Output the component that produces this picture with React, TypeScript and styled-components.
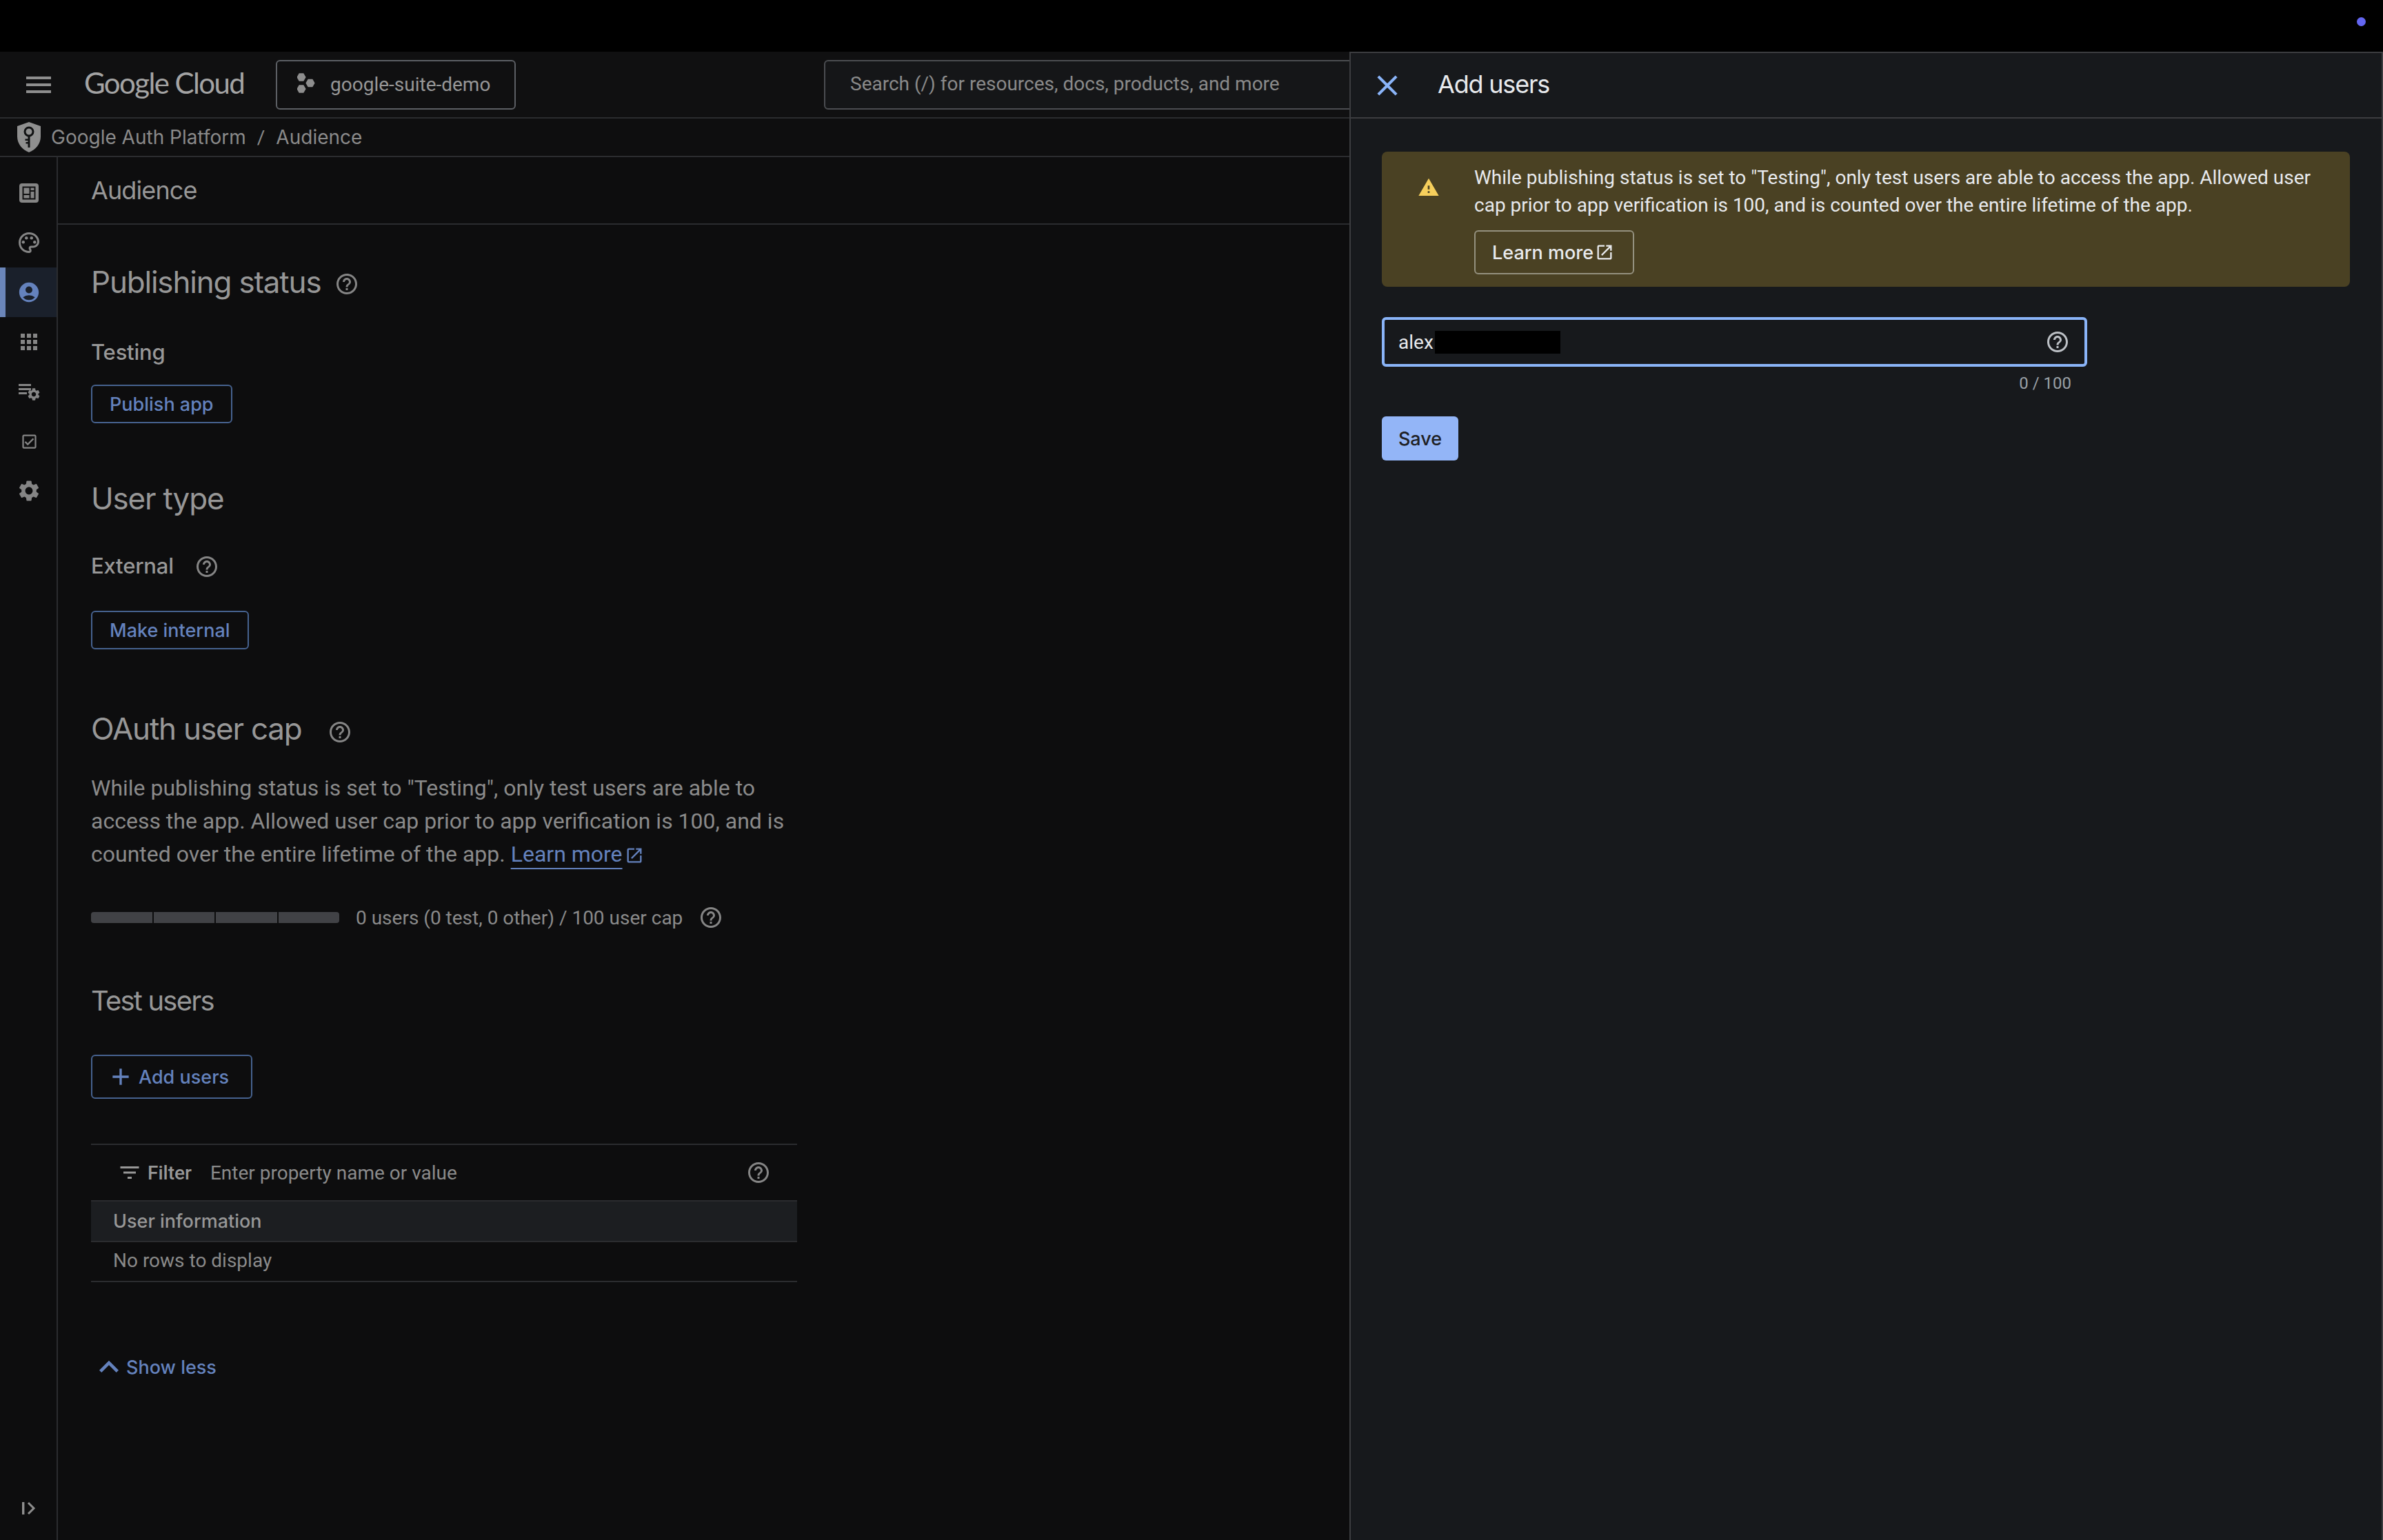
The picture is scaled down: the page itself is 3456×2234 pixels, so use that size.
import { FC, ReactNode } from 'react';
import styled, { createGlobalStyle } from 'styled-components';
import {
  MdAccountCircle,
  MdAdd,
  MdApps,
  MdClose,
  MdExpandLess,
  MdFilterList,
  MdHelpOutline,
  MdMenu,
  MdOpenInNew,
  MdOutlineCheckBox,
  MdOutlinePalette,
  MdSettings,
  MdWarning,
} from 'react-icons/md';

const SANS = '"Roboto", "Liberation Sans", sans-serif';
const DISPLAY = '"Inter", "Roboto", sans-serif';
const DIM = '#979797';
const DIM_BODY = '#8a8a8a';
const DIM_BLUE = '#6482bd';
const LINE = '#2b2c2f';

const GEAR =
  'M19.14 12.94c.04-.3.06-.61.06-.94 0-.32-.02-.64-.07-.94l2.03-1.58c.18-.14.23-.41.12-.61l-1.92-3.32c-.12-.22-.37-.29-.59-.22l-2.39.96c-.5-.38-1.03-.7-1.62-.94l-.36-2.54c-.04-.24-.24-.41-.48-.41h-3.84c-.24 0-.43.17-.47.41l-.36 2.54c-.59.24-1.13.57-1.62.94l-2.39-.96c-.22-.08-.47 0-.59.22L2.74 8.87c-.12.21-.08.47.12.61l2.03 1.58c-.05.3-.09.63-.09.94s.02.64.07.94l-2.03 1.58c-.18.14-.23.41-.12.61l1.92 3.32c.12.22.37.29.59.22l2.39-.96c.5.38 1.03.7 1.62.94l.36 2.54c.05.24.24.41.48.41h3.84c.24 0 .44-.17.47-.41l.36-2.54c.59-.24 1.13-.56 1.62-.94l2.39.96c.22.08.47 0 .59-.22l1.92-3.32c.12-.22.07-.47-.12-.61l-2.01-1.58zM12 15.6c-1.98 0-3.6-1.62-3.6-3.6s1.62-3.6 3.6-3.6 3.6 1.62 3.6 3.6-1.62 3.6-3.6 3.6z';

const GlobalStyle = createGlobalStyle`
  html, body {
    margin: 0;
    height: 2234px;
    overflow: hidden;
    background: #0d0d0e;
    font-family: ${SANS};
  }
  * {
    box-sizing: border-box;
  }
`;

const DashboardIcon: FC = () => (
  <svg width='28' height='28' viewBox='0 0 28 28'>
    <rect width='28' height='28' rx='4' fill='#858585' />
    <rect x='4.500' y='4.500' width='19' height='19' fill='#111112' />
    <path
      d='M6.500 6.500h8v8.500h-8zM6.500 17h8v4.500h-8zM16.500 6.500h5v3.500h-5zM16.500 12h5v9.500h-5z'
      fill='#858585'
    />
  </svg>
);

const RulesIcon: FC = () => (
  <svg width='32' height='28' viewBox='0 0 32 28'>
    <path d='M1 3h18v3H1zM1 9h18v3H1zM1 15h12v3H1z' fill='#858585' />
    <g transform='translate(12.200 7.200) scale(.9)'>
      <path d={GEAR} fill='#858585' />
    </g>
  </svg>
);

const ProjectIcon: FC = () => (
  <svg width='28' height='34' viewBox='0 0 28 34'>
    <path
      d='M-.6 6l3.300-5.700h6.600L12.600 6l-3.300 5.700H2.700zM12.400 14.500l3.300-5.700h6.600l3.300 5.700-3.300 5.700h-6.600zM-.6 23l3.300-5.700h6.600l3.300 5.700-3.300 5.700H2.700z'
      fill='#8e8e8e'
    />
  </svg>
);

const ShieldIcon: FC = () => (
  <svg width='36' height='44' viewBox='0 0 36 44'>
    <path
      d='M18 0l17 6v15c0 10.500-7 19-17 23C8 40 1 31.500 1 21V6z'
      fill='#8f8f8f'
    />
    <circle cx='18' cy='14' r='6' fill='none' stroke='#101112' strokeWidth='3' />
    <path
      d='M16.500 19.500h3V37h-3zM12.500 24.500h4v2.600h-4zM13.500 29h3v2.600h-3z'
      fill='#101112'
    />
  </svg>
);

const CollapseIcon: FC = () => (
  <svg width='20' height='20' viewBox='0 0 20 20'>
    <path d='M0 1h3.400v18H0z' fill='#8d8d8d' />
    <path d='M9 2l8 8-8 8' fill='none' stroke='#8d8d8d' strokeWidth='3' />
  </svg>
);

interface SideItem {
  key: string;
  icon: ReactNode;
  active?: boolean;
}

const sideItems: SideItem[] = [
  { key: 'overview', icon: <DashboardIcon /> },
  { key: 'branding', icon: <MdOutlinePalette size={36} /> },
  { key: 'audience', icon: <MdAccountCircle size={34} />, active: true },
  { key: 'clients', icon: <MdApps size={36} /> },
  { key: 'access', icon: <RulesIcon /> },
  { key: 'verification', icon: <MdOutlineCheckBox size={27} /> },
  { key: 'settings', icon: <MdSettings size={36} /> },
];

const App: FC = () => (
  <Page>
    <GlobalStyle />
    <TopStrip>
      <StatusDot />
    </TopStrip>
    <Header>
      <MenuButton>
        <MdMenu size={48} />
      </MenuButton>
      <Logo>Google Cloud</Logo>
      <ProjectPicker>
        <ProjectIcon />
        google-suite-demo
      </ProjectPicker>
      <SearchBox>Search (/) for resources, docs, products, and more</SearchBox>
    </Header>
    <Breadcrumb>
      <ShieldIcon />
      <CrumbLink>Google Auth Platform</CrumbLink>
      <CrumbSep>/</CrumbSep>
      <CrumbLink>Audience</CrumbLink>
    </Breadcrumb>
    <Body>
      <Sidebar>
        <SideList>
          {sideItems.map((item) => (
            <SideRow key={item.key} $active={item.active}>
              {item.icon}
            </SideRow>
          ))}
        </SideList>
        <CollapseRow>
          <CollapseIcon />
        </CollapseRow>
      </Sidebar>
      <Content>
        <TitleBar>Audience</TitleBar>
        <Sections>
          <Heading $top={55}>
            Publishing status
            <Help $left={20} $top={6} />
          </Heading>
          <Label $top={53}>Testing</Label>
          <OutlineButton $top={28}>Publish app</OutlineButton>

          <Heading $top={81}>User type</Heading>
          <Label $top={49}>
            External
            <Help $left={30} $top={4} />
          </Label>
          <OutlineButton $top={46}>Make internal</OutlineButton>

          <Heading $top={87}>
            OAuth user cap
            <Help $left={37} $top={10} />
          </Heading>
          <Paragraph>
            While publishing status is set to "Testing", only test users are
            able to access the app. Allowed user cap prior to app verification
            is 100, and is counted over the entire lifetime of the app.{' '}
            <TextLink>Learn more</TextLink>
            <LinkIcon>
              <MdOpenInNew size={28} />
            </LinkIcon>
          </Paragraph>
          <CapRow>
            <CapBar>
              <CapSegment />
              <CapSegment />
              <CapSegment />
              <CapSegment />
            </CapBar>
            <CapText>0 users (0 test, 0 other) / 100 user cap</CapText>
            <Help $left={23} $top={0} />
          </CapRow>

          <SubHeading>Test users</SubHeading>
          <AddButton>
            <MdAdd size={40} />
            Add users
          </AddButton>

          <Table>
            <FilterRow>
              <FilterLabel>
                <MdFilterList size={36} />
                Filter
              </FilterLabel>
              <FilterInput>Enter property name or value</FilterInput>
              <Help $left={0} $top={0} />
            </FilterRow>
            <HeadRow>User information</HeadRow>
            <EmptyRow>No rows to display</EmptyRow>
          </Table>

          <ShowLess>
            <MdExpandLess size={56} />
            Show less
          </ShowLess>
        </Sections>
      </Content>
    </Body>

    <Panel>
      <PanelHeader>
        <CloseButton>
          <MdClose size={50} />
        </CloseButton>
        <PanelTitle>Add users</PanelTitle>
      </PanelHeader>
      <PanelBody>
        <Notice>
          <NoticeIcon>
            <MdWarning size={32} />
          </NoticeIcon>
          <NoticeContent>
            <NoticeText>
              While publishing status is set to "Testing", only test users are
              able to access the app. Allowed user cap prior to app verification
              is 100, and is counted over the entire lifetime of the app.
            </NoticeText>
            <NoticeButton>
              Learn more
              <MdOpenInNew size={28} />
            </NoticeButton>
          </NoticeContent>
        </Notice>
        <EmailField>
          alex
          <Redaction />
          <FieldHelp>
            <MdHelpOutline size={36} />
          </FieldHelp>
        </EmailField>
        <Counter>0 / 100</Counter>
        <SaveButton>Save</SaveButton>
      </PanelBody>
    </Panel>
  </Page>
);

const Help: FC<{ $left: number; $top: number }> = ({ $left, $top }) => (
  <HelpWrap $left={$left} $top={$top}>
    <MdHelpOutline size={36} />
  </HelpWrap>
);

const Page = styled.div`
  position: relative;
  width: 3456px;
  height: 2234px;
  display: flex;
  flex-direction: column;
  overflow: hidden;
  background: #0d0d0e;
`;

const TopStrip = styled.div`
  position: relative;
  height: 75px;
  flex: none;
  background: #000;
`;

const StatusDot = styled.span`
  position: absolute;
  top: 25px;
  right: 25px;
  width: 13px;
  height: 13px;
  border-radius: 50%;
  background: #6366f1;
`;

const Header = styled.header`
  height: 97px;
  flex: none;
  display: flex;
  align-items: center;
  padding-left: 32px;
  background: #101011;
  border-bottom: 2px solid ${LINE};
`;

const MenuButton = styled.div`
  display: flex;
  color: #8e8e8e;
`;

const Logo = styled.div`
  width: 232px;
  margin: -6px 46px 0 42px;
  font-family: 'Lato', sans-serif;
  font-size: 42px;
  letter-spacing: -1.6px;
  white-space: nowrap;
  color: #a4a4a4;
`;

const ProjectPicker = styled.div`
  width: 348px;
  height: 72px;
  display: flex;
  align-items: center;
  gap: 20px;
  padding-left: 29px;
  border: 2px solid #5c5f64;
  border-radius: 6px;
  font-size: 28px;
  color: ${DIM};
`;

const SearchBox = styled.div`
  width: 800px;
  height: 72px;
  display: flex;
  align-items: center;
  margin-left: 447px;
  padding: 0 0 2px 36px;
  background: #151618;
  border: 2px solid #4b4d51;
  border-radius: 6px;
  font-size: 28px;
  color: ${DIM_BODY};
`;

const Breadcrumb = styled.nav`
  height: 56px;
  flex: none;
  display: flex;
  align-items: center;
  padding-left: 24px;
  background: #0e0e0f;
  border-bottom: 2px solid ${LINE};
  font-size: 28px;
  color: ${DIM_BODY};
`;

const CrumbLink = styled.span`
  margin-left: 14px;
  font-family: ${DISPLAY};
  font-size: 28px;
`;

const CrumbSep = styled.span`
  margin-left: 16px;
  margin-right: 2px;
`;

const Body = styled.div`
  flex: 1;
  display: flex;
  min-height: 0;
`;

const Sidebar = styled.aside`
  width: 84px;
  flex: none;
  display: flex;
  flex-direction: column;
  justify-content: space-between;
  padding-top: 16px;
  border-right: 2px solid ${LINE};
`;

const SideList = styled.div`
  display: flex;
  flex-direction: column;
`;

const SideRow = styled.div<{ $active?: boolean }>`
  height: 72px;
  display: flex;
  align-items: center;
  justify-content: center;
  padding-left: 2px;
  color: ${(p) => (p.$active ? DIM_BLUE : '#858585')};
  background: ${(p) => (p.$active ? '#1a202b' : 'transparent')};
  box-shadow: ${(p) => (p.$active ? 'inset 8px 0 0 #6b86ba' : 'none')};
`;

const CollapseRow = styled.div`
  height: 68px;
  display: flex;
  justify-content: center;
  padding: 12px 0 0 2px;
`;

const Content = styled.main`
  flex: 1;
  min-width: 0;
`;

const TitleBar = styled.div`
  height: 98px;
  display: flex;
  align-items: center;
  padding-left: 48px;
  border-bottom: 2px solid ${LINE};
  font-family: ${DISPLAY};
  font-size: 36px;
  letter-spacing: -0.9px;
  color: ${DIM};
`;

const Sections = styled.div`
  display: flex;
  flex-direction: column;
  align-items: flex-start;
  padding-left: 48px;
`;

const Heading = styled.h2<{ $top: number }>`
  display: flex;
  align-items: center;
  height: 56px;
  margin: ${(p) => p.$top}px 0 0;
  font-family: ${DISPLAY};
  font-size: 44px;
  font-weight: 400;
  letter-spacing: -1.2px;
  color: ${DIM};
`;

const SubHeading = styled.h3`
  height: 56px;
  margin: 73px 0 0;
  font-family: ${DISPLAY};
  font-size: 40px;
  font-weight: 400;
  line-height: 56px;
  letter-spacing: -1.8px;
  color: ${DIM};
`;

const Label = styled.div<{ $top: number }>`
  display: flex;
  align-items: center;
  height: 40px;
  margin-top: ${(p) => p.$top}px;
  font-family: ${DISPLAY};
  font-size: 31px;
  font-weight: 500;
  letter-spacing: -0.2px;
  color: ${DIM};
`;

const HelpWrap = styled.span<{ $left: number; $top: number }>`
  display: inline-flex;
  margin-left: ${(p) => p.$left}px;
  margin-top: ${(p) => p.$top}px;
  color: #858585;
`;

const OutlineButton = styled.div<{ $top: number }>`
  height: 56px;
  display: inline-flex;
  align-items: center;
  margin-top: ${(p) => p.$top}px;
  padding: 0 25px;
  border: 2px solid #46628f;
  border-radius: 6px;
  font-family: ${DISPLAY};
  font-size: 27px;
  font-weight: 500;
  color: ${DIM_BLUE};
`;

const Paragraph = styled.p`
  width: 1030px;
  margin: 34px 0 0;
  font-size: 32px;
  line-height: 48px;
  color: ${DIM_BODY};
`;

const TextLink = styled.span`
  color: ${DIM_BLUE};
  text-decoration: underline;
  text-underline-offset: 9px;
  text-decoration-thickness: 2px;
`;

const LinkIcon = styled.span`
  display: inline-flex;
  margin-left: 3px;
  vertical-align: -5px;
  color: ${DIM_BLUE};
`;

const CapRow = styled.div`
  display: flex;
  align-items: center;
  height: 40px;
  margin-top: 48px;
`;

const CapBar = styled.div`
  width: 360px;
  height: 16px;
  display: grid;
  grid-template-columns: repeat(4, 1fr);
  gap: 2px;
  border-radius: 4px;
  overflow: hidden;
`;

const CapSegment = styled.span`
  background: #414246;
`;

const CapText = styled.span`
  margin-left: 24px;
  font-size: 28px;
  color: ${DIM_BODY};
`;

const AddButton = styled.div`
  width: 234px;
  height: 64px;
  display: flex;
  align-items: center;
  gap: 6px;
  margin-top: 50px;
  padding-left: 21px;
  border: 2px solid #46628f;
  border-radius: 6px;
  font-family: ${DISPLAY};
  font-size: 27px;
  font-weight: 500;
  white-space: nowrap;
  color: ${DIM_BLUE};
`;

const Table = styled.div`
  width: 1024px;
  margin-top: 65px;
  border-top: 2px solid ${LINE};
  font-size: 28px;
`;

const FilterRow = styled.div`
  height: 80px;
  display: flex;
  align-items: center;
  padding: 0 38px 0 38px;
`;

const FilterLabel = styled.div`
  display: flex;
  align-items: center;
  gap: 8px;
  font-weight: 500;
  color: ${DIM};
`;

const FilterInput = styled.div`
  flex: 1;
  margin-left: 27px;
  color: ${DIM_BODY};
`;

const HeadRow = styled.div`
  height: 61px;
  display: flex;
  align-items: center;
  padding-left: 32px;
  background: #1c1e21;
  border-top: 2px solid ${LINE};
  border-bottom: 2px solid ${LINE};
  font-family: ${DISPLAY};
  font-size: 27px;
  font-weight: 500;
  color: ${DIM};
`;

const EmptyRow = styled.div`
  height: 58px;
  display: flex;
  align-items: center;
  padding: 0 0 4px 32px;
  border-bottom: 2px solid ${LINE};
  color: ${DIM_BODY};
`;

const ShowLess = styled.div`
  height: 40px;
  display: flex;
  align-items: center;
  margin-top: 103px;
  margin-left: -2px;
  font-family: ${DISPLAY};
  font-size: 27px;
  font-weight: 500;
  color: ${DIM_BLUE};
  & > svg {
    margin-right: -3px;
  }
`;

const Panel = styled.aside`
  position: absolute;
  top: 75px;
  left: 1957px;
  right: 0;
  bottom: 0;
  background: #17191c;
  border-top: 2px solid #3c3d40;
  border-left: 2px solid #3c3d40;
  border-right: 2px solid #3c3d40;
`;

const PanelHeader = styled.div`
  height: 95px;
  display: flex;
  align-items: center;
  padding-left: 28px;
  border-bottom: 2px solid #3c3d40;
`;

const CloseButton = styled.div`
  display: flex;
  color: #8ab4f8;
`;

const PanelTitle = styled.h1`
  margin: -3px 0 0 48px;
  font-family: ${DISPLAY};
  font-size: 36px;
  font-weight: 400;
  letter-spacing: -1.2px;
  color: #e8eaed;
`;

const PanelBody = styled.div`
  padding: 48px 46px 0 45px;
`;

const Notice = styled.div`
  display: flex;
  padding: 18px 34px 18px 52px;
  background: #4a4123;
  border-radius: 8px;
`;

const NoticeIcon = styled.div`
  flex: none;
  width: 82px;
  margin-top: 18px;
  color: #f6cf5c;
`;

const NoticeContent = styled.div`
  flex: 1;
`;

const NoticeText = styled.div`
  font-size: 28px;
  line-height: 40px;
  color: #e8eaed;
`;

const NoticeButton = styled.div`
  width: 232px;
  height: 64px;
  display: flex;
  align-items: center;
  margin-top: 16px;
  padding-left: 24px;
  gap: 2px;
  border: 2px solid #94917f;
  border-radius: 6px;
  font-family: ${DISPLAY};
  font-size: 27px;
  font-weight: 500;
  color: #e8eaed;
`;

const EmailField = styled.div`
  width: 1023px;
  height: 72px;
  display: flex;
  align-items: center;
  margin-top: 44px;
  padding: 0 21px 0 20px;
  border: 4px solid #8ab4f8;
  border-radius: 6px;
  font-size: 28px;
  color: #e8eaed;
`;

const Redaction = styled.span`
  width: 182px;
  height: 33px;
  margin: 1px 0 0 2px;
  background: #000;
`;

const FieldHelp = styled.span`
  display: flex;
  margin-left: auto;
  color: #bdc1c6;
`;

const Counter = styled.div`
  width: 1000px;
  margin-top: 10px;
  text-align: right;
  font-size: 24px;
  line-height: 28px;
  color: #9aa0a6;
`;

const SaveButton = styled.div`
  width: 111px;
  height: 64px;
  display: flex;
  align-items: center;
  justify-content: center;
  margin-top: 34px;
  background: #93b5f7;
  border-radius: 6px;
  font-family: ${DISPLAY};
  font-size: 27px;
  font-weight: 500;
  color: #202124;
`;

export default App;
